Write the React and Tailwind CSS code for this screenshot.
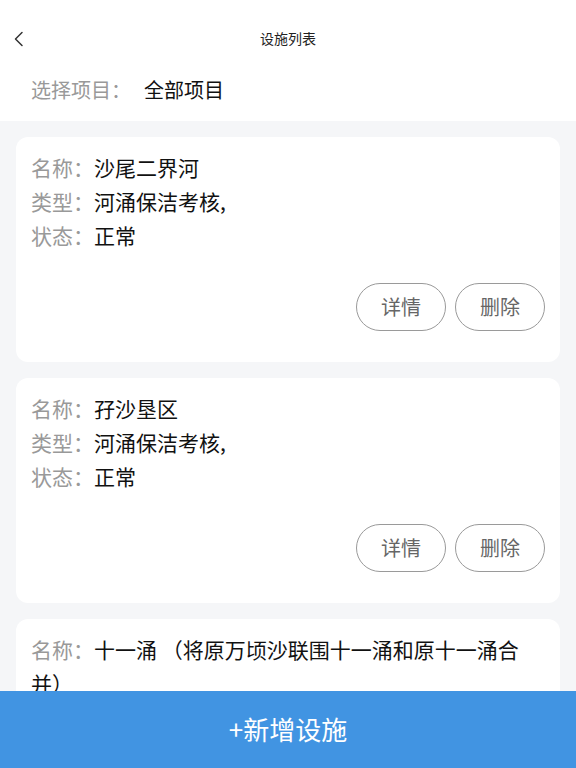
import React from "react";

const items = [
  { name: "沙尾二界河", type: "河涌保洁考核,", status: "正常" },
  { name: "孖沙垦区", type: "河涌保洁考核,", status: "正常" },
  { name: "十一涌 （将原万顷沙联围十一涌和原十一涌合并）", type: "河涌保洁考核,", status: "正常" },
];

const Row = ({ label, value }) => (
  <div className="leading-[34px]">
    <span className="text-[#999999]">{label}：</span>
    <span className="text-[#111111]">{value}</span>
  </div>
);

const App = () => {
  return (
    <div
      className="h-screen flex flex-col bg-[#f5f6f8] overflow-hidden"
      style={{ fontFamily: '"Noto Sans CJK SC", "Noto Sans", sans-serif' }}
    >
      {/* Header */}
      <div className="bg-white pb-[7px]">
        <div className="relative mt-[10px] h-[56px] flex items-center justify-center">
          <svg
            className="absolute left-[13px] top-[21px]"
            width="12"
            height="16"
            viewBox="0 0 12 16"
            fill="none"
          >
            <path d="M9 1.5 L2.5 8 L9 14.5" stroke="#333" strokeWidth="1.5" strokeLinecap="round" strokeLinejoin="round" />
          </svg>
          <span className="text-[14px] text-[#222]">设施列表</span>
        </div>
        <div className="h-[48px] flex items-center px-[31px] text-[20px]">
          <span className="text-[#999999]">选择项目：</span>
          <span className="ml-[13px] text-[#111111]">全部项目</span>
        </div>
      </div>

      {/* List */}
      <div className="flex-1 overflow-hidden px-[16px] pt-[16px] flex flex-col gap-[16px]">
        {items.map((item, i) => (
          <div key={i} className="bg-white rounded-[12px] px-[15px] pt-[13px] pb-[31px] text-[21px] shrink-0">
            <Row label="名称" value={item.name} />
            <Row label="类型" value={item.type} />
            <Row label="状态" value={item.status} />
            <div className="mt-[31px] flex justify-end gap-[9px]">
              <button className="w-[90px] h-[48px] rounded-full border-[1.5px] border-[#9a9a9a] text-[20px] text-[#666]">
                详情
              </button>
              <button className="w-[90px] h-[48px] rounded-full border-[1.5px] border-[#9a9a9a] text-[20px] text-[#666]">
                删除
              </button>
            </div>
          </div>
        ))}
      </div>

      {/* Bottom button */}
      <button className="h-[77px] w-full bg-[#4194e2] text-white text-[26px] pb-[3px] flex items-center justify-center shrink-0">
        +新增设施
      </button>
    </div>
  );
};

export default App;
